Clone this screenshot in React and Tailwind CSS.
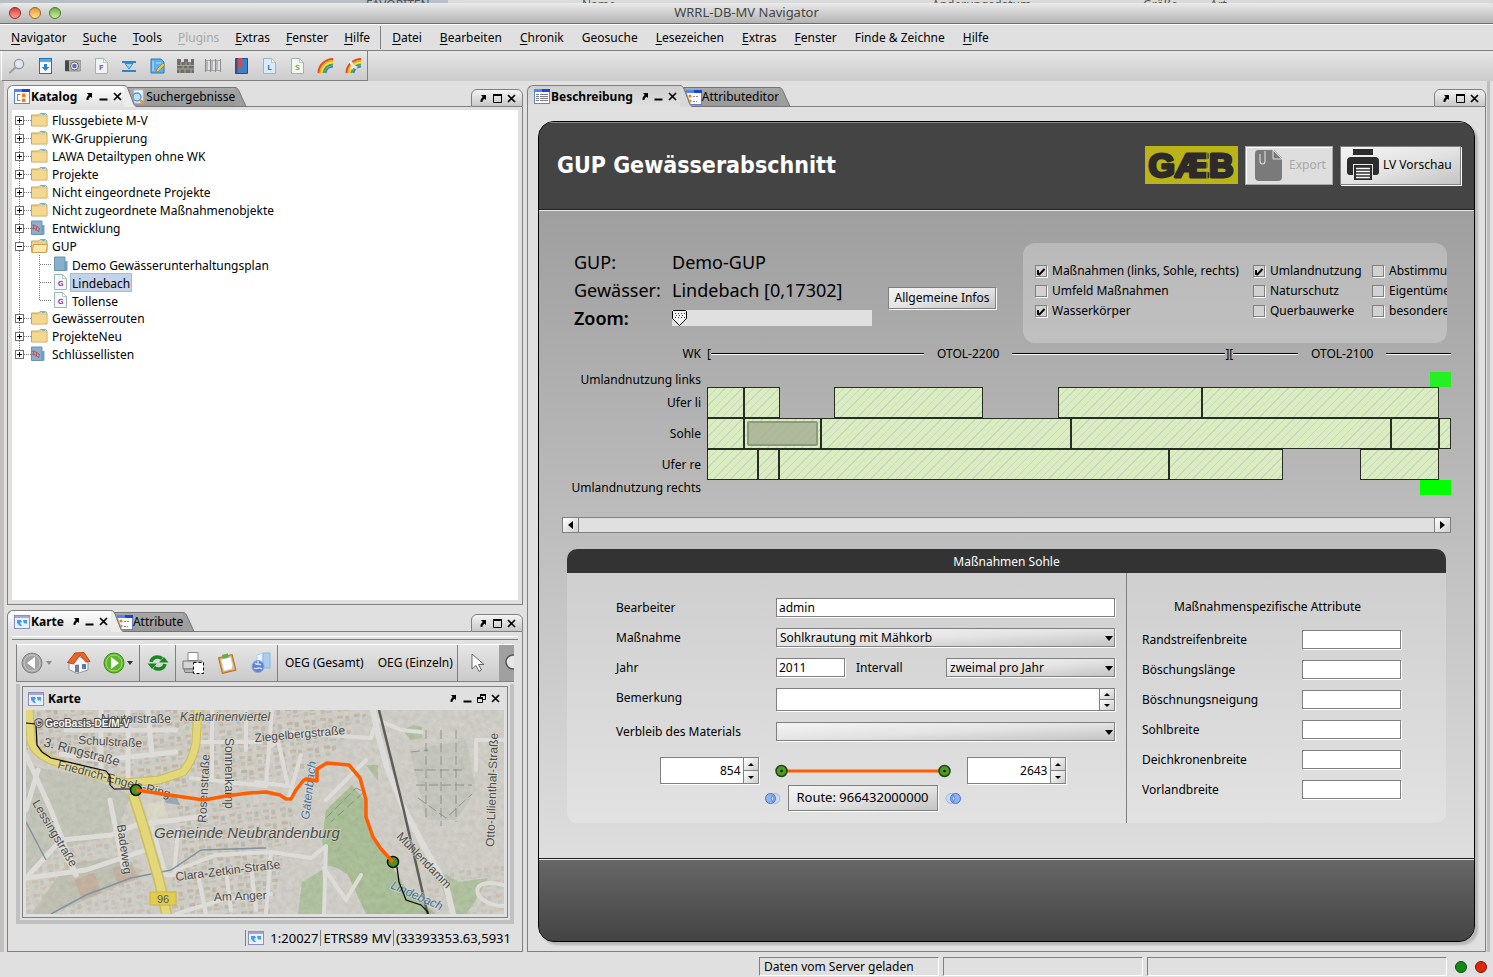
import React from "react";

/* ---------- small icons ---------- */

function PinIcon() {
  return (
    <svg width="8" height="9" viewBox="0 0 8 9" aria-hidden="true">
      <path d="M2 1h5v5L5.500 4.700 C4 5.500 3.500 6.500 3.500 8H1.500C1.300 6 2 4.500 3.700 3z" fill="#000" />
    </svg>
  );
}
function MinIcon() {
  return (
    <svg width="9" height="9" viewBox="0 0 9 9" aria-hidden="true">
      <path d="M0.500 6.500h8v2h-8z" fill="#000" />
    </svg>
  );
}
function CloseIcon() {
  return (
    <svg width="9" height="9" viewBox="0 0 9 9" aria-hidden="true">
      <path d="M1 1l7 7M8 1L1 8" stroke="#000" strokeWidth="1.700" />
    </svg>
  );
}
function MaxIcon() {
  return (
    <svg width="9" height="9" viewBox="0 0 9 9" aria-hidden="true">
      <path d="M0.500 0.500h8v8h-8z" fill="none" stroke="#000" />
      <path d="M0 0h9v2H0z" fill="#000" />
    </svg>
  );
}
function RestoreIcon() {
  return (
    <svg width="9" height="9" viewBox="0 0 9 9" aria-hidden="true">
      <path d="M3.500 3V0.500h5v5H6M0.500 3.500h5v5h-5z" fill="none" stroke="#000" />
      <path d="M3 0h6v2H3zM0 3h6v2H0z" fill="#000" />
    </svg>
  );
}

function WindowFrame({ children }) {
  return (
    <svg width="16" height="15" viewBox="0 0 16 15" className="shrink-0" aria-hidden="true">
      <rect x="0.500" y="0.500" width="15" height="14" fill="#fff" stroke="#5d86cf" />
      <rect width="16" height="3" fill="#1a45dc" />
      <path d="M0 0h8v3H0z" fill="#4f86f2" />
      {children}
    </svg>
  );
}
function CatalogIcon() {
  return (
    <WindowFrame>
      <path d="M3.500 5v7M3.500 5.500h3M3.500 11.500h3" stroke="#888" fill="none" />
      <path d="M8 4.500h3.500v3.500H8zM8 9.500h3.500V13H8z" fill="#f57c14" />
    </WindowFrame>
  );
}
function AttributeIcon() {
  return (
    <WindowFrame>
      <circle cx="4" cy="6" r="1.600" fill="#f57c14" />
      <circle cx="4" cy="11" r="1.600" fill="#f57c14" />
      <path d="M7 6.500h5M7 11.500h4" stroke="#888" strokeDasharray="2 1" />
    </WindowFrame>
  );
}
function DescriptionIcon() {
  return (
    <WindowFrame>
      <path d="M2 5.500h3M2 7.500h3M2 9.500h3M2 11.500h3M6 5.500h8M6 7.500h8M6 9.500h8M6 11.500h8" stroke="#7c7c86" />
    </WindowFrame>
  );
}
function MapIcon() {
  return (
    <svg width="16" height="14" viewBox="0 0 16 14" className="shrink-0" aria-hidden="true">
      <rect x="0.500" y="0.500" width="15" height="13" fill="#eef3fa" stroke="#8a8fc0" />
      <path d="M1 1h14v2H1z" fill="#a9a6d8" />
      <rect x="2" y="4" width="12" height="8" fill="#e3f2ff" />
      <path d="M3 5l4 0 1 2-2 1 2 3H6L3 8zM9 5h4v4l-2-1-1 1z" fill="#4a9ae8" />
    </svg>
  );
}
function SearchPageIcon() {
  return (
    <svg width="16" height="17" viewBox="0 0 16 17" className="shrink-0" aria-hidden="true">
      <path d="M4 1h9v13H4z" fill="#fff" stroke="#b8c4d4" />
      <circle cx="7" cy="8" r="4" fill="#bfe0fb" stroke="#5d93cf" strokeWidth="1.500" />
      <path d="M10 11l4 4" stroke="#d79a3c" strokeWidth="2.500" />
    </svg>
  );
}

function PageLetterIcon({ letter, color, fill }) {
  return (
    <svg width="13" height="16" viewBox="0 0 13 16" className="shrink-0" aria-hidden="true">
      <path d="M0.500 0.500h8l4 4v11h-12z" fill={fill} stroke="#9bb5b5" />
      <path d="M8.500 0.500v4h4z" fill="#fff" stroke="#9bb5b5" strokeWidth="0.700" />
      <text x="6.500" y="12" textAnchor="middle" fontFamily="DejaVu Sans" fontWeight="bold" fontSize="7" fill={color}>
        {letter}
      </text>
    </svg>
  );
}

const toolIcons = [
  ["Suchen", <svg width="18" height="16" viewBox="0 0 18 16"><circle cx="11" cy="6" r="4.600" fill="#dfe8f2" stroke="#8e969e" strokeWidth="1.300" /><path d="M7.500 9.500L2 14.500" stroke="#a0a0a0" strokeWidth="2.200" strokeLinecap="round" /></svg>],
  ["Herunterladen", <svg width="13" height="16" viewBox="0 0 13 16"><rect x="0.500" y="0.500" width="12" height="15" fill="#f4f9fd" stroke="#2273b5" /><path d="M1 1h11v3H1z" fill="#5aa8dc" /><path d="M5 6h3v3h2.500l-4 4-4-4H5z" fill="#2a86c8" /></svg>],
  ["Kamera", <svg width="16" height="13" viewBox="0 0 16 13"><rect y="1.500" width="16" height="10.500" rx="1" fill="#b4b4b4" stroke="#666" strokeWidth="0.600" /><path d="M0 1.500h4v10.500H0z" fill="#4a4a4a" /><circle cx="9.500" cy="7" r="4" fill="#efefef" stroke="#666" /><circle cx="9.500" cy="7" r="2.300" fill="#5f6cb0" /></svg>],
  ["Formular", <PageLetterIcon letter="F" color="#b048d0" fill="#eef5f2" />],
  ["Filter", <svg width="14" height="12" viewBox="0 0 14 12"><path d="M0 1h14v2H0zM0 10h14v2H0z" fill="#2d84c6" /><path d="M3 3.500h8L7 9z" fill="#9bd0f2" stroke="#3a8dcb" /></svg>],
  ["Notiz", <svg width="15" height="16" viewBox="0 0 15 16"><path d="M1 1h10l3 3v11H1z" fill="#5cb0ee" stroke="#2c77b8" /><path d="M3 3v10M6 5h5" stroke="#bfe2fa" /><path d="M6 14l1-3 6-6 2 2-6 6z" fill="#f2c23c" stroke="#9a7420" strokeWidth="0.600" /></svg>],
  ["Mauer", <svg width="17" height="14" viewBox="0 0 17 14"><path d="M0 0h4v3h3V0h4v3h3V0h3v14H0z" fill="#6f6d68" /><path d="M0 6.500h17M0 10h17M4 3v3M9 3v3M13 3v3M6 7v3M11 7v3M3 10v4M8 10v4M14 10v4" stroke="#aaa79e" /></svg>],
  ["Spalten", <svg width="16" height="13" viewBox="0 0 16 13"><path d="M0 1h16v11H0z" fill="#e2e2e4" /><path d="M0 1.500h16M0 11.500h16" stroke="#a8a8a8" /><path d="M0.500 0v13M5.500 0v13M10.500 0v13M15.500 0v13" stroke="#8a8a8a" /><path d="M2 2v9M7 2v9M12 2v9" stroke="#b8b8ba" strokeWidth="2" /></svg>],
  ["Buch", <svg width="13" height="16" viewBox="0 0 13 16"><path d="M0.500 0.500h12v15h-12z" fill="#3f7fc4" stroke="#274f86" /><path d="M0.500 0.500h2v15h-2z" fill="#2a5792" /><path d="M3 0h4v11L5 9.500 3 11z" fill="#e0434a" /></svg>],
  ["Liste", <PageLetterIcon letter="L" color="#3a78c8" fill="#d7ebf8" />],
  ["Schlüssel", <PageLetterIcon letter="S" color="#8bb82c" fill="#f2f7f4" />],
  ["Regenbogen", <Rainbow />],
  ["Regenbogen löschen", <Rainbow broken />],
];

function Rainbow({ broken }) {
  return (
    <svg width="17" height="17" viewBox="0 0 17 17" aria-hidden="true">
      <g fill="none" strokeWidth="2">
        <path d="M1.500 16A15 14 0 0 1 16 2" stroke="#e04a1c" />
        <path d="M3.500 16A13 12 0 0 1 16 4" stroke="#f7a020" />
        <path d="M5 16A11 10.500 0 0 1 16 5.500" stroke="#f5e03c" />
        <path d="M6.500 16A9.500 9 0 0 1 16 7.500" stroke="#46a83c" />
        <path d="M8.500 16A8 7.500 0 0 1 16 9.500" stroke="#4a7ad8" />
      </g>
      {broken && <path d="M5 4l3 5-2 3M8 9l4 2" stroke="#e6e6e6" strokeWidth="3" fill="none" />}
    </svg>
  );
}

/* ---------- docking panel ---------- */

function Tool({ label, children }) {
  return (
    <button type="button" aria-label={label} className="flex h-3 w-[14px] items-center justify-center">
      {children}
    </button>
  );
}

function Panel({ icon, title, other, otherIcon, flat, className, children }) {
  return (
    <section className={"flex flex-col " + className}>
      <header className="flex h-[22px] shrink-0 items-end">
        <div
          className={
            "flex h-[22px] items-center gap-px rounded-tl-md border-t border-l border-[#808080] pl-1.5 " +
            (flat ? "bg-linear-to-b from-[#cfcfcf] to-[#e0e0e0]" : "bg-linear-to-b from-white to-[#e0e0e0]")
          }
        >
          {icon}
          <h2 className="font-bold">{title}</h2>
          <div className="ml-1 flex items-center">
            <Tool label="Anheften"><PinIcon /></Tool>
            <Tool label="Minimieren"><MinIcon /></Tool>
            <Tool label="Schließen"><CloseIcon /></Tool>
          </div>
        </div>
        <svg width="13" height="22" viewBox="0 0 13 22" className="shrink-0" aria-hidden="true">
          <path d="M0 0.500C2 0.500 3 2 4 4L9 17C10 20 11 21.500 13 21.500V2.500H3z" fill="#a3a3a3" />
          <path d="M0 0.500C2 0.500 3 2 4 4L9 17C10 20 11 21.500 13 21.500V22H0z" fill={flat ? "#d8d8d8" : "#ececec"} />
          <path d="M0 0.500C2 0.500 3 2 4 4L9 17C10 20 11 21.500 13 21.500M3.500 2.500H13" fill="none" stroke="#707070" />
        </svg>
        <button
          type="button"
          className="-ml-2 flex h-[20px] items-center border-t border-b border-[#757575] bg-linear-to-b from-[#a8a8a8] to-[#989898] pl-px [clip-path:polygon(0_0,100%_0,100%_100%,7px_100%)]"
        >
          {otherIcon}
          <span>{other}</span>
        </button>
        <svg width="12" height="20" viewBox="0 0 12 20" className="shrink-0" aria-hidden="true">
          <path d="M0 0.500C2 0.500 3 2 4 4L11 19.500H0z" fill="#9e9e9e" />
          <path d="M0 0.500C2 0.500 3 2 4 4L11 19.500H12M0 19.500H12" fill="none" stroke="#757575" />
        </svg>
        <div className="h-px flex-1 bg-[#808080]" />
        <div className="flex h-[18px] items-center rounded-t-md border border-[#808080] bg-linear-to-b from-[#f4f4f4] to-[#c8c8c8] px-1">
          <Tool label="Gruppe anheften"><PinIcon /></Tool>
          <Tool label="Maximieren"><MaxIcon /></Tool>
          <Tool label="Gruppe schließen"><CloseIcon /></Tool>
        </div>
      </header>
      <div className="flex min-h-0 flex-1 flex-col border-x border-b border-[#808080]">{children}</div>
    </section>
  );
}

/* ---------- catalogue tree ---------- */

const tree = [
  ["Flussgebiete M-V", "folder"],
  ["WK-Gruppierung", "folder"],
  ["LAWA Detailtypen ohne WK", "folder"],
  ["Projekte", "folder"],
  ["Nicht eingeordnete Projekte", "folder"],
  ["Nicht zugeordnete Maßnahmenobjekte", "folder"],
  ["Entwicklung", "server"],
  ["GUP", "open", [["Demo Gewässerunterhaltungsplan", "book"], ["Lindebach", "page"], ["Tollense", "page"]]],
  ["Gewässerrouten", "folder"],
  ["ProjekteNeu", "folder"],
  ["Schlüssellisten", "server"],
];

function NodeIcon({ kind }) {
  if (kind === "page") return <PageLetterIcon letter="G" color="#a040c0" fill="#f3f7f6" />;
  if (kind === "book" || kind === "server")
    return (
      <svg width="14" height="16" viewBox="0 0 14 16" className="shrink-0" aria-hidden="true">
        <path d="M0.500 1h10.500v13.500H0.500z" fill="#86b0cc" stroke="#6a93b0" />
        <path d="M10.500 6l1-1h2v9l-1 1h-2z" fill="#6f9fc4" />
        {kind === "server" && <path d="M1 5l4 1 4 3M1 8l4 1 3 3M3 4.500l-0.500 5M6 6l-1 5M8.500 8l-1 4" stroke="#cc4a52" strokeWidth="0.900" fill="none" />}
      </svg>
    );
  return (
    <svg width="17" height="14" viewBox="0 0 17 14" className="shrink-0" aria-hidden="true">
      <path d="M0.500 2h7l1.500-1.500h5.500l1.500 1.500v11h-15.500z" fill="#efcf85" stroke="#c9a357" />
      <path d="M11 1.500h3" stroke="#5cc1ee" />
      {kind === "open" ? (
        <path d="M2.500 5.500h14l-1.500 8H1z" fill="#fae6a8" stroke="#c9a357" />
      ) : (
        <path d="M1 4h14.500v8.500H1z" fill="#f5d88f" />
      )}
    </svg>
  );
}

function Tree() {
  return (
    <ul className="pt-px">
      {tree.map(([name, kind, children], i) => (
        <li key={name}>
          <div className="flex h-[18px] items-center">
            <svg width="19" height="18" className="shrink-0" aria-hidden="true">
              <path
                d={i === 0 ? "M7.500 9V18M8 9.500H19" : i === tree.length - 1 ? "M7.500 0V9M8 9.500H19" : "M7.500 0V18M8 9.500H19"}
                stroke="#777" strokeDasharray="1 1"
              />
              <rect x="3.500" y="5.500" width="8" height="8" fill="#fff" stroke="#707070" />
              <path d={children ? "M5 9.500h5" : "M5 9.500h5M7.500 7v5"} stroke="#000" />
            </svg>
            <span className="flex w-[21px]"><NodeIcon kind={kind} /></span>
            <span className="pt-[2px] leading-4 whitespace-nowrap">{name}</span>
          </div>
          {children && (
            <ul>
              {children.map(([child, childKind], j) => (
                <li key={child} className="flex h-[18px] items-center">
                  <svg width="42" height="18" className="shrink-0" aria-hidden="true">
                    <path
                      d={"M7.500 0V18M28 9.500H40" + (j === children.length - 1 ? "M27.500 0V9" : "M27.500 0V18")}
                      stroke="#777" strokeDasharray="1 1"
                    />
                  </svg>
                  <span className="flex w-4"><NodeIcon kind={childKind} /></span>
                  <span
                    className={
                      "border px-px pt-[2px] leading-[15px] whitespace-nowrap " +
                      (child === "Lindebach" ? "border-[#a3bbdc] bg-[#c3d3e9]" : "border-transparent")
                    }
                  >
                    {child}
                  </span>
                </li>
              ))}
            </ul>
          )}
        </li>
      ))}
    </ul>
  );
}

/* ---------- map ---------- */

const route = "M110 80L150 86L178 90L200 86L223 83L240 82L254 85L260 89L265 89L270 80L277 71L280 69L291 71V59L301 53L323 55L334 68L340 90V107L347 127L355 139L367 152";

function CityMap() {
  return (
    <svg viewBox="0 0 478 204" preserveAspectRatio="xMidYMid slice" className="block h-[204px] w-full" role="img" aria-label="Karte">
      <defs>
        <filter id="aerial" x="0" y="0" width="100%" height="100%">
          <feTurbulence type="fractalNoise" baseFrequency="0.180" numOctaves="4" seed="7" />
          <feColorMatrix values="0.500 0 0 0 0.460  0.450 0 0 0 0.480  0.400 0 0 0 0.450  0 0 0 0 0.500" />
        </filter>
        <pattern id="houses" width="17" height="14" patternUnits="userSpaceOnUse" patternTransform="rotate(-7)">
          <rect x="2" y="2" width="6" height="3" fill="#b59a86" />
          <rect x="10" y="3" width="4" height="5" fill="#a99f92" />
          <rect x="3" y="8" width="4" height="4" fill="#a8ad98" />
          <rect x="9" y="10" width="6" height="2" fill="#bca592" />
        </pattern>
      </defs>
      <rect width="478" height="204" fill="#c8c6be" />
      <path d="M0 0H345L300 50L240 75L110 80L80 70L0 40zM150 95L270 92L245 204H145z" fill="url(#houses)" opacity="0.700" />
      <path d="M0 100L40 95L100 100L125 204H0zM395 170L478 150V204H400z" fill="url(#houses)" opacity="0.400" />
      <path d="M0 55L60 66L105 85L90 125L30 140L0 170z" fill="#b5b9aa" />
      <path d="M40 155L80 148L118 160L95 175L25 204H5z" fill="#b3b4a3" />
      <path d="M48 170l20-7 8 20-20 7zM86 158l20-6 6 17-20 6z" fill="#b98d78" opacity="0.600" />
      <path d="M117 95l20-4 6 18-18 6z" fill="#d8d5c0" />
      <path d="M136 85h14l4 10-14-2z" fill="#7795aa" />
      <path d="M296 130L300 100L326 75L338 90L345 125L362 150L380 178L410 204H340L322 165L312 158L300 155z" fill="#93b07d" />
      <path d="M272 204L276 172L296 160L300 204zM410 158L432 172L462 168L450 190L440 204H425zM377 20l10-5 9 2v11l-12 2zM340 55l12 0v16z" fill="#9cb588" />
      <path d="M384 40L440 30L450 80L430 110H400z" fill="#b9bbb0" />
      <rect width="478" height="204" filter="url(#aerial)" opacity="0.600" />
      <g fill="none" stroke="#dddcd8" strokeLinecap="round" strokeLinejoin="round">
        <path d="M40 20H150M75 0V66M102 0V66M35 44L75 50L150 42M122 0L126 45M0 45L25 100L50 165M0 100L12 60" strokeWidth="5" />
        <path d="M0 168L35 130L85 125L110 115L180 106M0 168L60 160L120 140M84 90L98 160M30 128L50 165" strokeWidth="5" />
        <path d="M165 68L240 76L246 0M172 32H235M203 30V80M186 0V70M220 0V40M252 30L262 76L230 72M246 36L258 22L345 28L348 18M262 90L275 45" strokeWidth="4" />
        <path d="M125 112L140 165L148 165L152 120M150 160L190 145L245 142L285 148L300 136L298 204M245 142L240 204M172 165L180 204M200 160L205 200M225 155L230 200M150 204L195 190L245 184" strokeWidth="4" />
        <path d="M347 0L351 20L361 57L377 97L400 140L420 175L427 204" strokeWidth="6" />
        <path d="M352 10L375 20L395 22M298 158L320 190L335 165M478 30H450V60M478 175C440 165 445 195 478 196M340 50L300 90" strokeWidth="4" />
      </g>
      <path d="M385 42L402 40M388 60H440M390 75H446M400 20V110M415 20V116M430 20V112M392 88L420 108L446 84M300 108L330 78L338 82L305 112" fill="none" stroke="#7e8178" strokeDasharray="9 4" opacity="0.700" />
      <path d="M0 112L20 150M25 204L60 185L105 168L145 160L175 140L240 138" fill="none" stroke="#7f94a1" strokeWidth="1.500" />
      <g fill="none" stroke="#cdbd5c" strokeWidth="9">
        <path d="M3 0L5 30Q7 42 25 50L60 62L100 73L133 70L157 62Q167 50 170 33L172 0" />
        <path d="M107 84L118 118L133 170L141 206" strokeWidth="11" />
      </g>
      <g fill="none" stroke="#e2d779" strokeWidth="7">
        <path d="M3 0L5 30Q7 42 25 50L60 62L100 73L133 70L157 62Q167 50 170 33L172 0" />
        <path d="M107 84L118 118L133 170L141 206" strokeWidth="8" />
      </g>
      <path d="M331 0L353 0" stroke="none" />
      <path d="M353 0L377 97L402 206" stroke="#5e5e5a" strokeWidth="2.500" fill="none" />
      <g fontFamily="Liberation Sans" fontSize="12" fill="#4a4a4a" stroke="#e4e2dc" strokeWidth="1.500" strokeOpacity="0.600" paintOrder="stroke">
        <text x="75" y="13">Neutorstraße</text>
        <text x="154" y="11" fontStyle="italic">Katharinenviertel</text>
        <text x="52" y="34" transform="rotate(3 52 34)">Schulstraße</text>
        <text x="17" y="36" fontSize="13" transform="rotate(15 17 36)">3. Ringstraße</text>
        <text x="31" y="58" transform="rotate(15 31 58)">Friedrich-Engels-Ring</text>
        <text x="6" y="93" transform="rotate(59 6 93)">Lessingstraße</text>
        <text x="91" y="115" transform="rotate(82 91 115)">Badeweg</text>
        <text x="180" y="113" transform="rotate(-87 180 113)">Rosenstraße</text>
        <text x="199" y="28" transform="rotate(90 199 28)">Sonnenkamp</text>
        <text x="229" y="32" transform="rotate(-5 229 32)">Ziegelbergstraße</text>
        <text x="128" y="128" fontSize="15" fontStyle="italic">Gemeinde Neubrandenburg</text>
        <text x="150" y="171" transform="rotate(-7 150 171)">Clara-Zetkin-Straße</text>
        <text x="188" y="191" transform="rotate(-2 188 191)">Am Anger</text>
        <text x="370" y="127" transform="rotate(46 370 127)">Mühlendamm</text>
        <text x="468" y="137" transform="rotate(-88 468 137)">Otto-Lilienthal-Straße</text>
        <text x="283" y="110" fill="#3f7099" fontStyle="italic" transform="rotate(-83 283 110)">Gätenbach</text>
        <text x="364" y="178" fill="#3f7099" fontStyle="italic" fontSize="12" transform="rotate(24 364 178)">Lindebach</text>
      </g>
      <rect x="124" y="182" width="26" height="13" fill="#e0cd4e" stroke="#c9b53c" />
      <text x="137" y="193" textAnchor="middle" fontFamily="Liberation Sans" fontSize="11" fill="#555">96</text>
      <path d="M0 13L10 14L11 35L16 42L25 48L80 61L84 66V75L88 79H108M371 157L373 172L380 190L395 195L402 202V205" fill="none" stroke="#000" strokeWidth="1.200" />
      <circle cx="110" cy="80" r="5.500" fill="#45962a" stroke="#101a08" strokeWidth="1.500" />
      <circle cx="367" cy="152" r="5.500" fill="#45962a" stroke="#101a08" strokeWidth="1.500" />
      <path d={route} fill="none" stroke="#ff5e00" strokeWidth="3.500" strokeLinejoin="round" />
      <text x="9" y="17" fontFamily="Liberation Sans" fontWeight="bold" fontSize="10" fill="#fff" stroke="#444" strokeWidth="2" paintOrder="stroke">
        © GeoBasis-DE/M-V
      </text>
    </svg>
  );
}

function MapTool({ label, sep, children }) {
  return (
    <button
      type="button"
      aria-label={label}
      className={"flex h-full w-10 shrink-0 items-center justify-center " + (sep ? "border-r border-[#808080]" : "")}
    >
      {children}
    </button>
  );
}

function MapToolbar() {
  return (
    <div className="mt-1 flex h-[38px] overflow-hidden border-y border-l border-t-white border-b-[#808080] border-l-[#808080] bg-linear-to-b from-[#e6e6e6] to-[#cacaca]">
      <MapTool label="Zurück">
        <svg width="32" height="22" viewBox="0 0 32 22"><circle cx="11" cy="11" r="10" fill="#a4a4a4" stroke="#808080" /><circle cx="11" cy="11" r="8" fill="none" stroke="#c8c8c8" /><path d="M14 5v12L6 11z" fill="#fff" /><path d="M25 9h6l-3 4z" fill="#8a8a8a" /></svg>
      </MapTool>
      <span className="w-[2px] shrink-0" />
      <MapTool label="Startansicht">
        <svg width="24" height="22" viewBox="0 0 24 22"><path d="M2 10l9-6 10 5v9l-11 3.500-8-4z" fill="#f4f5f9" stroke="#8f97a8" /><path d="M0.500 10.500L8 1l9-0.500 6 9-4 0.500-6-7-6.500 9z" fill="#e8662a" stroke="#b84a18" /><path d="M8 13l4-0.500v8l-4-0.500z" fill="#6f7f9e" /><path d="M15 12h4v5h-4z" fill="#5e7a9e" /></svg>
      </MapTool>
      <button type="button" aria-label="Vor" className="flex h-full w-[41px] shrink-0 items-center justify-center border-r border-[#808080]">
        <svg width="32" height="22" viewBox="0 0 32 22"><circle cx="11" cy="11" r="10" fill="#5cb82a" stroke="#3f8f18" /><circle cx="11" cy="11" r="8" fill="none" stroke="#a3dc7a" /><path d="M8 5v12l8-6z" fill="#fff" /><path d="M24 9h6l-3 4z" fill="#333" /></svg>
      </button>
      <button type="button" aria-label="Neu laden" className="flex h-full w-9 shrink-0 items-center justify-center border-r border-[#808080]">
        <svg width="22" height="18" viewBox="0 0 22 18"><g fill="none" stroke="#17881c" strokeWidth="3.500"><path d="M4 8C5 3 11 1.500 15 4.500" /><path d="M18 10C17 15 11 16.500 7 13.500" /></g><path d="M12 8.500h9.500L17 3zM10 9.500H0.500L5 15z" fill="#17881c" /></svg>
      </button>
      <button type="button" aria-label="Drucken" className="flex h-full w-[34px] shrink-0 items-center justify-center">
        <svg width="22" height="22" viewBox="0 0 22 22"><path d="M6 0.500h10v8H6z" fill="#fff" stroke="#888" /><path d="M1 9h19v8H1z" fill="#d4d4d4" stroke="#777" /><path d="M2 17h9v3.500H3z" fill="#b8b8b8" stroke="#777" /><path d="M11.500 10.500h10v11h-10z" fill="#fff" stroke="#000" strokeDasharray="3 2" /></svg>
      </button>
      <button type="button" aria-label="Zwischenablage" className="flex h-full w-[34px] shrink-0 items-center justify-center">
        <svg width="21" height="21" viewBox="0 0 21 21"><g transform="rotate(-14 10 10)"><path d="M3 3h14v16H3z" fill="#e9a13a" stroke="#b96f18" /><path d="M5 5h10v12H5z" fill="#fff" stroke="#c8d6ee" /><path d="M7 1h6v4H7z" fill="#56b344" /><path d="M13 17l2-3v3z" fill="#9cbce8" /></g></svg>
      </button>
      <button type="button" aria-label="Export" className="flex h-full w-[34px] shrink-0 items-center justify-center border-r border-[#808080]">
        <svg width="20" height="22" viewBox="0 0 20 22"><path d="M6 3l6-2v15l-6 3z" fill="#e8f2fc" stroke="#b4cbe4" /><path d="M12 1h7v15h-7z" fill="#a9cdec" stroke="#8db4dc" /><circle cx="7" cy="14.500" r="6" fill="#5c82d8" stroke="#8aa4e0" /><path d="M4 11c2 3 4 0 6 2M3 16c3 2 5-2 8 1M7 9v3" stroke="#cfdcf8" strokeWidth="1.500" fill="none" /></svg>
      </button>
      <button type="button" className="shrink-0 px-[7px]">OEG (Gesamt)</button>
      <button type="button" className="shrink-0 border-r border-[#808080] pr-[4px] pl-[7px]">OEG (Einzeln)</button>
      <button type="button" aria-label="Auswahl" className="flex h-full w-[41px] shrink-0 items-center justify-center">
        <svg width="14" height="20" viewBox="0 0 14 20"><path d="M1 1v15l4-3.500 3 6 2.500-1.500-3-5.500H13z" fill="#fff" stroke="#666" /></svg>
      </button>
      <button type="button" aria-label="Zoom" className="flex h-full min-w-0 flex-1 items-center overflow-hidden bg-[#a0a0a0] pl-1.5">
        <svg width="18" height="18" viewBox="0 0 18 18" className="shrink-0"><circle cx="8" cy="8" r="7" fill="#e8e8e8" stroke="#555" strokeWidth="1.500" /></svg>
      </button>
    </div>
  );
}

/* ---------- river chart ---------- */

const TRACK = 744;
const rows = {
  left: [[0, 37], [37, 73], [127, 276], [351, 495], [495, 732]],
  bed: [[0, 37], [37, 114], [114, 364], [364, 684], [684, 732], [732, 744]],
  right: [[0, 51], [51, 72], [72, 462], [462, 576], [653, 732]],
};
const pct = (n) => (n / TRACK) * 100 + "%";

function SegmentRow({ label, segments, selected }) {
  let end = 0;
  return (
    <div className="flex h-[31px] items-center gap-[6px]">
      <div className="w-[162px] shrink-0 text-right">{label}</div>
      <div className="flex h-full min-w-0 flex-1">
        {segments.map(([from, to], i) => {
          const gap = from - end;
          end = to;
          return (
            <div
              key={from}
              style={{ width: pct(to - from), marginLeft: pct(gap) }}
              className="shrink-0 border border-[#262d22] bg-[repeating-linear-gradient(135deg,#cbd6c0_0px,#cbd6c0_1px,#daedc0_1px,#daedc0_6px)]"
            >
              {selected === i && <div className="m-[2px] h-[25px] rounded-xs border-2 border-[#8f997e] bg-[#a3ad8ecc]" />}
            </div>
          );
        })}
      </div>
    </div>
  );
}

function LandRow({ label, from, green }) {
  return (
    <div className="flex h-[15px] items-center gap-[6px]">
      <div className="w-[162px] shrink-0 text-right">{label}</div>
      <div className="flex h-full min-w-0 flex-1">
        <div className={"h-full " + green} style={{ marginLeft: pct(from), width: pct(TRACK - from) }} />
      </div>
    </div>
  );
}

function Rule({ grow }) {
  return <div style={{ flexGrow: grow }} className="h-[2px] basis-0 border-t border-b border-t-black border-b-white" />;
}

function Chart() {
  return (
    <div className="mt-px pr-[23px]">
      <div className="mb-2 flex h-5 items-center gap-[6px]">
        <div className="w-[162px] shrink-0 text-right">WK</div>
        <div className="flex min-w-0 flex-1 items-center">
          <span>[</span>
          <Rule grow={211} />
          <span className="px-[13px]">OTOL-2200</span>
          <Rule grow={211} />
          <span>][</span>
          <Rule grow={64} />
          <span className="px-[13px]">OTOL-2100</span>
          <Rule grow={64} />
        </div>
      </div>
      <LandRow label="Umlandnutzung links" from={723} green="bg-[#24f024]" />
      <SegmentRow label="Ufer li" segments={rows.left} />
      <SegmentRow label="Sohle" segments={rows.bed} selected={1} />
      <SegmentRow label="Ufer re" segments={rows.right} />
      <LandRow label="Umlandnutzung rechts" from={713} green="bg-[#00ff00]" />
    </div>
  );
}

/* ---------- form controls ---------- */

const metal = "border border-[#808080] bg-linear-to-br from-[#f4f4f4] via-[#e4e4e4] to-[#c4c4c4] shadow-[1px_1px_0_#fff]";
const field = "border border-[#808080] bg-white px-[2px] shadow-[1px_1px_0_#fff] outline-none";

function Select({ id, value, className }) {
  return (
    <div className={"relative " + className}>
      <select id={id} defaultValue={value} className={"block h-[19px] w-full appearance-none pl-[3px] leading-4 outline-none " + metal}>
        <option>{value}</option>
      </select>
      <svg width="8" height="5" viewBox="0 0 8 5" className="pointer-events-none absolute top-2 right-[2px]" aria-hidden="true">
        <path d="M0 0h8L4 5z" />
      </svg>
    </div>
  );
}

function Arrows() {
  return (
    <div className="flex w-[15px] shrink-0 flex-col">
      <button type="button" aria-label="Mehr" className="flex flex-1 items-center justify-center border-b border-l border-[#808080] bg-linear-to-br from-white to-[#cdcdcd]">
        <svg width="6" height="3" viewBox="0 0 6 3"><path d="M0 3h6L3 0z" /></svg>
      </button>
      <button type="button" aria-label="Weniger" className="flex flex-1 items-center justify-center border-l border-[#808080] bg-linear-to-br from-white to-[#cdcdcd]">
        <svg width="6" height="3" viewBox="0 0 6 3"><path d="M0 0h6L3 3z" /></svg>
      </button>
    </div>
  );
}

function Spinner({ label, value }) {
  return (
    <div className="flex h-[27px] w-[99px] border border-[#808080] shadow-[1px_1px_0_#fff]">
      <input aria-label={label} defaultValue={value} className="min-w-0 flex-1 bg-white pr-[2px] text-right outline-none" />
      <Arrows />
    </div>
  );
}

function CheckBox({ id, label, checked }) {
  return (
    <div className="flex h-5 items-center gap-[5px] whitespace-nowrap">
      <span className="relative flex size-3 shrink-0">
        <input
          id={id}
          type="checkbox"
          defaultChecked={checked}
          className="peer size-3 appearance-none border border-[#808080] bg-[#d2d2d2] shadow-[1px_1px_0_#fff]"
        />
        <svg viewBox="0 0 12 12" className="pointer-events-none absolute inset-0 hidden size-3 peer-checked:block" aria-hidden="true">
          <path d="M3 5v4l1.500 0.500L9.500 4" fill="none" stroke="#000" strokeWidth="1.900" />
        </svg>
      </span>
      <label htmlFor={id}>{label}</label>
    </div>
  );
}

function Overlap({ flip }) {
  return (
    <svg width="16" height="13" viewBox="0 0 16 13" className={flip ? "-scale-x-100" : ""} aria-hidden="true">
      <circle cx="10" cy="6.500" r="5" fill="#c5dcee" stroke="#9ebfe0" />
      <circle cx="5.500" cy="6.500" r="5" fill="#8fb2ee" stroke="#4a6fd6" />
      <path d="M7.500 3a6 6 0 0 1 0 7a6 6 0 0 1 0-7" fill="#dbe9fb" stroke="#4a6fd6" strokeWidth="0.800" />
    </svg>
  );
}

function MeasureForm() {
  const attrs = ["Randstreifenbreite", "Böschungslänge", "Böschnungsneigung", "Sohlbreite", "Deichkronenbreite", "Vorlandbreite"];
  return (
    <section className="mx-[28px] mt-4 overflow-hidden rounded-[10px] bg-linear-to-b from-[#cdcdcd] to-[#e2e2e2]">
      <h3 className="flex h-6 items-center justify-center bg-[#333] pt-px text-white">Maßnahmen Sohle</h3>
      <div className="flex h-[250px]">
        <div className="flex-1 pt-[25px] pr-[11px] pl-[49px]">
          <div className="grid grid-cols-[160px_1fr] items-center gap-y-[11px] leading-[19px]">
            <label htmlFor="bearbeiter">Bearbeiter</label>
            <input id="bearbeiter" defaultValue="admin" className={"h-[19px] " + field} />
            <label htmlFor="massnahme">Maßnahme</label>
            <Select id="massnahme" value="Sohlkrautung mit Mähkorb" />
            <label htmlFor="jahr">Jahr</label>
            <div className="flex">
              <input id="jahr" defaultValue="2011" className={"h-[19px] w-[69px] " + field} />
              <label htmlFor="intervall" className="w-[101px] pl-[11px]">Intervall</label>
              <Select id="intervall" value="zweimal pro Jahr" className="flex-1" />
            </div>
            <label htmlFor="bemerkung" className="self-start">Bemerkung</label>
            <div className="flex h-[23px] border border-[#808080] shadow-[1px_1px_0_#fff]">
              <textarea id="bemerkung" className="h-[21px] min-w-0 flex-1 resize-none bg-white outline-none" />
              <Arrows />
            </div>
            <label htmlFor="verbleib">Verbleib des Materials</label>
            <Select id="verbleib" value="" />
          </div>
          <div className="mt-4 mr-[6px] flex items-center justify-center gap-4">
            <Spinner label="Von" value="854" />
            <svg width="176" height="14" viewBox="0 0 176 14" aria-hidden="true">
              <path d="M6 7H170" stroke="#ff5e00" strokeWidth="3" />
              {[6.500, 169.500].map((x) => (
                <g key={x}>
                  <circle cx={x} cy="7" r="5.500" fill="#4c9c22" stroke="#24401a" strokeWidth="1.500" />
                  <circle cx={x} cy="7" r="1.300" fill="#102008" />
                </g>
              ))}
            </svg>
            <Spinner label="Bis" value="2643" />
          </div>
          <div className="mt-px mr-[6px] flex items-center justify-center gap-[7px]">
            <Overlap />
            <button type="button" className={"h-[26px] w-[150px] text-[13px] " + metal}>Route: 966432000000</button>
            <Overlap flip />
          </div>
        </div>
        <div className="w-[320px] border-l border-[#808080] pl-[15px]">
          <h4 className="mt-[25px] mr-[53px] text-center leading-[18px]">Maßnahmenspezifische Attribute</h4>
          <div className="mt-[14px] grid grid-cols-[160px_99px] items-center gap-y-[11px]">
            {attrs.map((a) => (
              <React.Fragment key={a}>
                <label htmlFor={a} className="leading-[18px]">{a}</label>
                <input id={a} className={"h-[19px] " + field} />
              </React.Fragment>
            ))}
          </div>
        </div>
      </div>
    </section>
  );
}

function Editor() {
  return (
    <div className="flex flex-1 flex-col pt-[14px] pr-[10px] pb-[9px] pl-[10px]">
      <div className="flex flex-1 flex-col overflow-hidden rounded-2xl border border-black bg-[#444] shadow-[3px_3px_2px_#b8b8b8]">
        <div className="flex h-[88px] items-center gap-[7px] border-t border-b border-t-[#8a8a8a] border-b-[#222] bg-[#444] pr-[13px] pb-[2px] pl-[18px]">
          <h1 className="flex-1 font-['DejaVu_Sans_Condensed','DejaVu_Sans',sans-serif] text-[23px] font-bold text-white">GUP Gewässerabschnitt</h1>
          <svg width="93" height="38" viewBox="0 0 93 38" role="img" aria-label="GÆB">
            <rect width="93" height="38" fill="#bab419" />
            <text x="46" y="31" textAnchor="middle" fontFamily="Liberation Sans" fontWeight="bold" fontSize="34" fill="#2e2a2c" stroke="#2e2a2c" strokeWidth="3" strokeLinejoin="round">GÆB</text>
            <path d="M62 4v30" stroke="#bab419" strokeWidth="1" />
          </svg>
          <button type="button" disabled className="flex h-[39px] w-[88px] items-center gap-[7px] border border-[#a8a8a8] bg-[#dedede] pl-[9px] text-[#a8a8a8] shadow-[inset_1px_1px_0_#fff]">
            <svg width="27" height="31" viewBox="0 0 27 31" aria-hidden="true">
              <path d="M3 0h16l8 8v19q0 4-4 4H4q-4 0-4-4V4q0-4 3-4z" fill="#7a7a7a" />
              <path d="M18 0v9h9z" fill="#7a7a7a" stroke="#dedede" />
              <path d="M5 4v7q0 3 2.500 3t2.500-3V1" fill="none" stroke="#d6d6d6" strokeWidth="1.200" />
            </svg>
            Export
          </button>
          <button type="button" className={"flex h-[39px] w-[121px] items-center gap-1 pl-[6px] whitespace-nowrap " + metal}>
            <svg width="32" height="32" viewBox="0 0 32 32" aria-hidden="true">
              <path d="M6 0h20v6H6zM4 8h24q4 0 4 4v11q0 3-3 3h-3v-11H6v11H3q-3 0-3-3V12q0-4 4-4z" fill="#2c2c2c" />
              <path d="M7 16h18v15H7z" fill="#2c2c2c" />
              <path d="M9 19.500h14M9 22.500h14M9 25.500h14M9 28.500h14" stroke="#fff" strokeWidth="1.300" />
            </svg>
            LV Vorschau
          </button>
        </div>
        <div className="flex-1 border-t border-t-[#e8e8e8] bg-linear-to-b from-[#9f9f9f] to-[#dedede] pt-[32px] pb-[35px]">
          <div className="flex pr-[27px] pl-[35px]">
            <div className="grid w-[314px] grid-cols-[98px_1fr] auto-rows-[28px] items-center pt-[5px] text-lg">
              <span>GUP:</span>
              <span>Demo-GUP</span>
              <span>Gewässer:</span>
              <span>Lindebach [0,17302]</span>
              <label htmlFor="zoom" className="font-semibold">Zoom:</label>
              <span className="relative flex">
                <input
                  id="zoom"
                  type="range"
                  defaultValue="0"
                  className="h-4 w-[200px] appearance-none bg-[#e0e0e0] [&::-webkit-slider-thumb]:opacity-0"
                />
                <svg width="15" height="16" viewBox="0 0 15 16" className="pointer-events-none absolute top-0 left-0" aria-hidden="true">
                  <path d="M0.500 1.500l1-1h12l1 1v7l-7 7-7-7z" fill="#f2f2f2" stroke="#000" />
                  <path d="M3 3.500h10M4 5.500h8M3 7.500h10" stroke="#333" strokeDasharray="1 2" />
                </svg>
              </span>
            </div>
            <button type="button" className={"mt-[44px] h-[22px] w-[108px] whitespace-nowrap " + metal}>Allgemeine Infos</button>
            <div className="ml-auto flex h-[100px] w-[424px] overflow-hidden rounded-xl bg-white/25 pt-[18px] pl-[12px]">
              <div className="w-[218px] shrink-0">
                <CheckBox id="c1" label="Maßnahmen (links, Sohle, rechts)" checked />
                <CheckBox id="c2" label="Umfeld Maßnahmen" />
                <CheckBox id="c3" label="Wasserkörper" checked />
              </div>
              <div className="w-[119px] shrink-0">
                <CheckBox id="c4" label="Umlandnutzung" checked />
                <CheckBox id="c5" label="Naturschutz" />
                <CheckBox id="c6" label="Querbauwerke" />
              </div>
              <div className="min-w-0 flex-1 overflow-hidden">
                <CheckBox id="c7" label="Abstimmung" />
                <CheckBox id="c8" label="Eigentümer" />
                <CheckBox id="c9" label="besondere" />
              </div>
            </div>
          </div>
          <Chart />
          <div className="mt-[22px] mr-[23px] ml-[23px] flex h-4 border border-[#808080] bg-[#e0e0e0]">
            <button type="button" aria-label="Nach links" className="flex w-4 items-center justify-center border-r border-[#808080] bg-linear-to-br from-white to-[#cfcfcf]">
              <svg width="5" height="8" viewBox="0 0 5 8"><path d="M5 0v8L0 4z" /></svg>
            </button>
            <div className="flex-1" />
            <button type="button" aria-label="Nach rechts" className="flex w-4 items-center justify-center border-l border-[#808080] bg-linear-to-br from-white to-[#cfcfcf]">
              <svg width="5" height="8" viewBox="0 0 5 8"><path d="M0 0v8l5-4z" /></svg>
            </button>
          </div>
          <MeasureForm />
        </div>
        <div className="h-[83px] border-t border-[#222] bg-linear-to-b from-[#676767] to-[#444] shadow-[inset_0_1px_0_#e8e8e8]" />
      </div>
    </div>
  );
}

/* ---------- shell ---------- */

const menuA = ["Navigator", "Suche", "Tools", "Plugins", "Extras", "Fenster", "Hilfe"];
const menuB = ["Datei", "Bearbeiten", "Chronik", "Geosuche", "Lesezeichen", "Extras", "Fenster", "Finde & Zeichne", "Hilfe"];
const noMnemonic = ["Geosuche", "Finde & Zeichne"];

function Menu({ items, pad }) {
  return items.map((m, i) => (
    <button key={m + i} type="button" disabled={m === "Plugins"} className={"whitespace-nowrap disabled:text-[#a8a8a8] " + pad}>
      {noMnemonic.includes(m) ? m : (
        <>
          <span className="underline underline-offset-2">{m[0]}</span>
          {m.slice(1)}
        </>
      )}
    </button>
  ));
}

export default function App() {
  return (
    <div className="flex min-h-screen flex-col bg-[#e0e0e0] font-['Noto_Sans','Open_Sans',sans-serif] text-xs text-black">
      <div className="grid h-[3px] grid-cols-[366px_216px_350px_211px_67px_1fr] items-end overflow-hidden bg-linear-to-r from-[#b8bfc6] from-30% via-[#dcdcdc] via-30% to-[#d8d8d8] leading-[9px] text-[#555]">
        <span />
        <span>FAVORITEN</span>
        <span>Name</span>
        <span>Änderungsdatum</span>
        <span>Größe</span>
        <span>Art</span>
      </div>
      <div className="flex h-[21px] items-center rounded-t-md border-b border-[#6e6e6e] bg-linear-to-b from-[#ebebeb] to-[#b4b4b4] px-[9px]">
        <div className="flex w-20 gap-2">
          <button type="button" aria-label="Fenster schließen" className="size-3 rounded-full border border-[#8e2a26] bg-linear-to-b from-[#d8403c] to-[#ff9c94]" />
          <button type="button" aria-label="Fenster minimieren" className="size-3 rounded-full border border-[#96641c] bg-linear-to-b from-[#e8963c] to-[#ffe08a]" />
          <button type="button" aria-label="Fenster vergrößern" className="size-3 rounded-full border border-[#47762a] bg-linear-to-b from-[#6fae4c] to-[#cdf0a0]" />
        </div>
        <div className="flex-1 text-center text-[13px] text-[#444]">WRRL-DB-MV Navigator</div>
        <div className="w-20" />
      </div>
      <nav className="flex h-[27px] items-center border-t border-b border-t-white border-b-[#808080] pl-[3px]">
        <Menu items={menuA} pad="px-2" />
        <span className="mx-[2px] h-[23px] w-px bg-[#808080]" />
        <Menu items={menuB} pad="px-[9px]" />
      </nav>
      <div className="flex h-[30px] bg-linear-to-b from-[#e6e6e6] to-[#cbcbcb] pl-px">
        <div className="flex border-r border-b border-l border-[#808080] border-l-white pl-px">
          {toolIcons.map(([label, icon]) => (
            <button key={label} type="button" aria-label={label} className="flex w-7 items-center justify-center">
              {icon}
            </button>
          ))}
        </div>
      </div>
      <div className="flex flex-1 border-l-4 border-[#c4c0c0] pt-1 pr-[3px] pl-[3px]">
        <div className="flex w-[516px] shrink-0 flex-col gap-[5px]">
          <Panel icon={<CatalogIcon />} title="Katalog" other="Suchergebnisse" otherIcon={<SearchPageIcon />} className="flex-1">
            <div className="mx-1 mt-[3px] mb-1 flex-1 bg-white"><Tree /></div>
          </Panel>
          <Panel icon={<MapIcon />} title="Karte" other="Attribute" otherIcon={<AttributeIcon />}>
            <div className="mx-1 mt-1 h-1 border-t border-b border-t-white border-b-[#808080]" />
            <div className="mr-2 ml-2">
              <MapToolbar />
              <div className="mt-[2px] border-x-4 border-b-4 border-[#c0c0c0]">
                <div className="border-2 border-[#e0e0e0] bg-[#e0e0e0]">
                  <div className="border border-[#808080] px-[3px] pb-[3px]">
                    <div className="flex h-[23px] items-center px-[2px]">
                      <MapIcon />
                      <h3 className="ml-1 flex-1 font-bold">Karte</h3>
                      <Tool label="Anheften"><PinIcon /></Tool>
                      <Tool label="Minimieren"><MinIcon /></Tool>
                      <Tool label="Wiederherstellen"><RestoreIcon /></Tool>
                      <Tool label="Schließen"><CloseIcon /></Tool>
                    </div>
                    <CityMap />
                  </div>
                </div>
              </div>
              <div className="flex h-[27px] items-center justify-end text-[13px] leading-4 whitespace-nowrap">
                <span className="flex items-center gap-[6px] border-l border-[#808080] px-[2px]"><MapIcon />1:20027</span>
                <span className="border-l border-[#808080] px-[2px]">ETRS89 MV</span>
                <span className="w-[121px] border-l border-[#808080] pl-[2px]">(33393353.63,5931</span>
              </div>
            </div>
          </Panel>
        </div>
        <Panel flat icon={<DescriptionIcon />} title="Beschreibung" other="Attributeditor" otherIcon={<AttributeIcon />} className="ml-1 min-w-0 flex-1">
          <Editor />
        </Panel>
        <div className="-mt-1 ml-px w-[3px] bg-[#bdbdbd]" />
      </div>
      <footer className="flex h-[25px] items-end justify-end gap-1 pr-[6px] pb-px">
        <div className="h-[19px] w-[180px] border border-[#808080] border-r-white border-b-white pl-1 leading-[17px]">Daten vom Server geladen</div>
        <div className="h-[19px] w-[200px] border border-[#808080] border-r-white border-b-white" />
        <div className="h-[19px] w-[300px] border border-[#808080] border-r-white border-b-white" />
        <span className="mb-[3px] ml-1 size-3 rounded-full border border-[#0d4a0d] bg-[#138a13]" />
        <span className="mb-[3px] ml-1 size-3 rounded-full border border-[#7a1408] bg-[#e02808]" />
      </footer>
    </div>
  );
}
